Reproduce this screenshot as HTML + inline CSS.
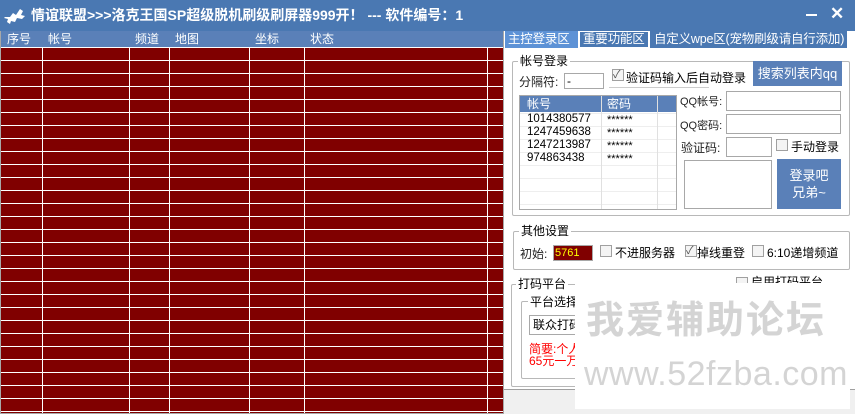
<!DOCTYPE html>
<html><head><meta charset="utf-8"><style>
*{margin:0;padding:0;box-sizing:border-box}
body{width:855px;height:414px;overflow:hidden;background:#f0f0f0;font-family:"Liberation Sans","Noto Sans CJK SC",sans-serif;font-size:12px;color:#000;position:relative}
.a{position:absolute;white-space:nowrap}
.title{left:0;top:0;width:855px;height:31px;background:#4a78b2}
.hd{top:31px;height:16px;background:#5a80b8;color:#fff;font-size:12px;line-height:16px}
.grid{left:1px;top:47px;width:502px;height:366px;background:repeating-linear-gradient(to bottom,#fff 0,#fff 1px,#800000 1px,#800000 13px)}
.vl{top:47px;width:1px;height:366px;background:#fff}
.gb{border:1px solid #b8b8b8;border-radius:2px}
.lbl{background:#fff;padding:0 2px;font-size:12px;line-height:14px}
.in{background:#fff;border:1px solid #a8a8a8}
.cb{width:12px;height:12px;border:1px solid #a0a0a0;background:#f4f4f4}
.btn{background:#5a80b8;color:#fff;text-align:center}
.tab{font-size:12.5px;letter-spacing:-0.2px}
</style></head><body>
<div class="a title"></div>
<svg class="a" style="left:3px;top:7px" width="26" height="18" viewBox="0 0 26 18"><path d="M2 10h5l3-4 3 2 4-6 3 2-2 4 4 1-3 3-5-1-2 4-4-1-1 3-3-2 1-3-4-1z" fill="#fff"/></svg>
<div class="a" style="left:31px;top:6px;color:#fff;font-size:14px;font-weight:bold;line-height:18px">情谊联盟&gt;&gt;&gt;洛克王国SP超级脱机刷级刷屏器999开！ --- 软件编号：1</div>
<div class="a" style="left:806px;top:14px;width:11px;height:2px;background:#fff"></div>
<div class="a" style="left:830px;top:4px;color:#fff;font-size:17px;font-weight:bold">✕</div>
<div class="a" style="left:0;top:31px;width:504px;height:383px;background:#a8a8a8"></div>
<div class="a hd" style="left:1px;width:502px"></div>
<div class="a hd" style="left:7px">序号</div>
<div class="a hd" style="left:48px">帐号</div>
<div class="a hd" style="left:135px">频道</div>
<div class="a hd" style="left:175px">地图</div>
<div class="a hd" style="left:255px">坐标</div>
<div class="a hd" style="left:310px">状态</div>
<div class="a grid"></div>
<div class="a vl" style="left:42px"></div><div class="a vl" style="left:129px"></div><div class="a vl" style="left:169px"></div><div class="a vl" style="left:249px"></div><div class="a vl" style="left:304px"></div><div class="a vl" style="left:487px"></div>
<div class="a" style="left:504px;top:31px;width:351px;height:359px;background:#fff"></div>
<div class="a" style="left:504px;top:389px;width:351px;height:1px;background:#a0a0a0"></div>
<div class="a tab" style="left:505px;top:31px;width:73px;height:17px;background:#5d92d6;color:#fff;line-height:17px;padding-left:3px">主控登录区</div>
<div class="a tab" style="left:579px;top:31px;width:70px;height:17px;background:#4a78b2;border:1px solid #fff;color:#fff;line-height:15px;padding-left:3px">重要功能区</div>
<div class="a tab" style="left:650px;top:31px;width:197px;height:17px;background:#4a78b2;color:#fff;line-height:17px;padding-left:4px;overflow:hidden">自定义wpe区(宠物刷级请自行添加)</div>
<div class="a gb" style="left:512px;top:61px;width:338px;height:155px"></div>
<div class="a lbl" style="left:518px;top:54px">帐号登录</div>
<div class="a" style="left:519px;top:73px;font-size:12px;color:#222">分隔符:</div>
<div class="a in" style="left:564px;top:73px;width:40px;height:16px;line-height:14px;padding-left:2px">-</div>
<div class="a cb" style="left:612px;top:69px;font-size:11px;line-height:10px;color:#555">✓</div>
<div class="a" style="left:626px;top:69px">验证码输入后自动登录</div>
<div class="a" style="left:609px;top:87px;width:100px;height:1px;background:#ccc"></div>
<div class="a btn" style="left:753px;top:61px;width:89px;height:25px;line-height:25px;font-size:13px">搜索列表内qq</div>
<div class="a" style="left:519px;top:95px;width:158px;height:115px;border:1px solid #a8a8a8;background:repeating-linear-gradient(to bottom,#eee 0,#eee 1px,#fff 1px,#fff 13px);background-position:0 17px"></div>
<div class="a" style="left:520px;top:96px;width:156px;height:16px;background:#5a80b8"></div>
<div class="a" style="left:601px;top:96px;width:1px;height:113px;background:#e0e0e0"></div>
<div class="a" style="left:657px;top:96px;width:1px;height:113px;background:#e0e0e0"></div>
<div class="a" style="left:527px;top:96px;color:#fff;line-height:16px">帐号</div>
<div class="a" style="left:607px;top:96px;color:#fff;line-height:16px">密码</div>
<div class="a" style="left:527px;top:113px;line-height:13px;font-size:11.5px">1014380577<br>1247459638<br>1247213987<br>974863438</div>
<div class="a" style="left:607px;top:114px;line-height:13px;font-size:11px">******<br>******<br>******<br>******</div>
<div class="a" style="left:680px;top:93px;color:#222;font-size:11px">QQ帐号:</div>
<div class="a in" style="left:726px;top:91px;width:115px;height:20px"></div>
<div class="a" style="left:680px;top:117px;color:#222;font-size:11px">QQ密码:</div>
<div class="a in" style="left:726px;top:114px;width:115px;height:20px"></div>
<div class="a" style="left:681px;top:139px;color:#222">验证码:</div>
<div class="a in" style="left:726px;top:137px;width:46px;height:20px"></div>
<div class="a cb" style="left:776px;top:139px"></div>
<div class="a" style="left:791px;top:138px">手动登录</div>
<div class="a in" style="left:684px;top:160px;width:88px;height:49px"></div>
<div class="a btn" style="left:777px;top:159px;width:64px;height:50px;font-size:13px;line-height:17px;padding-top:8px">登录吧<br>兄弟~</div>
<div class="a gb" style="left:513px;top:231px;width:337px;height:39px"></div>
<div class="a lbl" style="left:519px;top:224px">其他设置</div>
<div class="a" style="left:520px;top:245px;color:#222">初始:</div>
<div class="a" style="left:553px;top:245px;width:40px;height:16px;background:#800000;border:1px solid #a8a8a8;color:#ff0;font-size:11px;line-height:14px;padding-left:1px">5761</div>
<div class="a cb" style="left:600px;top:245px"></div><div class="a" style="left:615px;top:244px">不进服务器</div>
<div class="a cb" style="left:685px;top:245px;font-size:11px;line-height:10px;color:#555">✓</div><div class="a" style="left:697px;top:244px">掉线重登</div>
<div class="a cb" style="left:752px;top:245px"></div><div class="a" style="left:767px;top:244px">6:10递增频道</div>
<div class="a gb" style="left:511px;top:284px;width:339px;height:103px"></div>
<div class="a lbl" style="left:516px;top:277px">打码平台</div>
<div class="a cb" style="left:736px;top:277px"></div><div class="a lbl" style="left:749px;top:275px">启用打码平台</div>
<div class="a gb" style="left:521px;top:301px;width:60px;height:78px"></div>
<div class="a lbl" style="left:528px;top:295px">平台选择</div>
<div class="a in" style="left:529px;top:315px;width:60px;height:20px;line-height:18px;padding-left:3px;font-size:12px">联众打码</div>
<div class="a" style="left:529px;top:343px;color:#f00;line-height:12px;font-size:12px">简要:个人<br>65元一万</div>
<div class="a" style="left:575px;top:283px;width:275px;height:126px;background:#fff"></div>
<div class="a" style="left:586px;top:298px;color:#d4d4d4;font-size:38px;font-weight:bold;line-height:46px;letter-spacing:2px">我爱辅助论坛</div>
<div class="a" style="left:584px;top:354px;color:#d4d4d4;font-size:34px;line-height:40px;letter-spacing:0.5px">www.52fzba.com</div>
</body></html>
